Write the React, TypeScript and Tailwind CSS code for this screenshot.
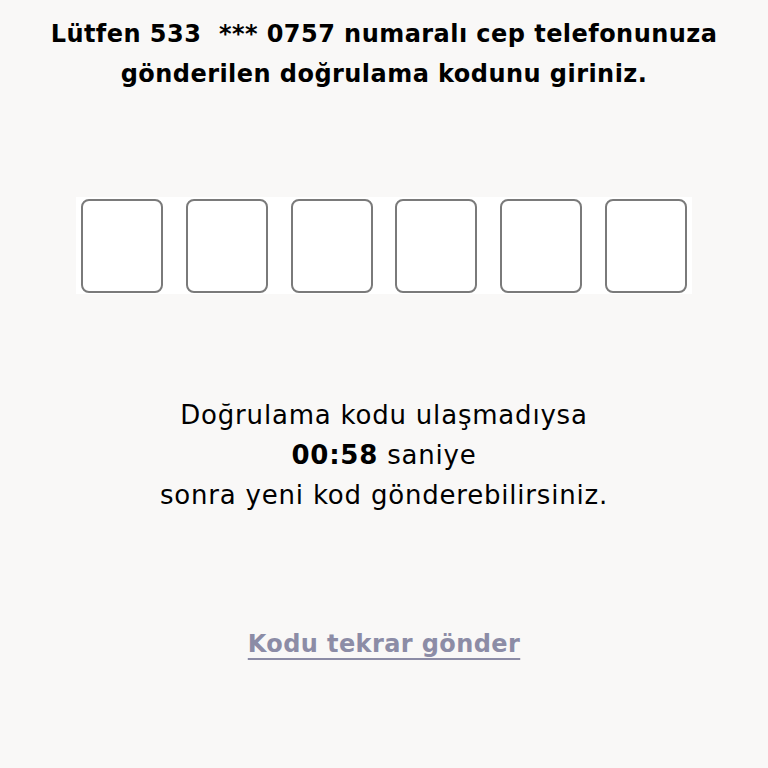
import { useRef, useState } from 'react';

const CODE_LENGTH = 6;

export default function App() {
  const [digits, setDigits] = useState<string[]>(Array(CODE_LENGTH).fill(''));
  const inputs = useRef<(HTMLInputElement | null)[]>([]);

  const handleChange = (index: number, value: string) => {
    const v = value.replace(/\D/g, '').slice(-1);
    const next = [...digits];
    next[index] = v;
    setDigits(next);
    if (v && index < CODE_LENGTH - 1) inputs.current[index + 1]?.focus();
  };

  return (
    <div
      className="min-h-screen w-full bg-[#f9f8f7] text-black flex flex-col items-center"
      style={{ fontFamily: '"DejaVu Sans", "Noto Sans", sans-serif' }}
    >
      <h1 className="mt-[14px] text-center text-[24px] leading-[40px] font-bold tracking-[0.45px]">
        Lütfen 533&nbsp; *** 0757 numaralı cep telefonunuza
        <br />
        gönderilen doğrulama kodunu giriniz.
      </h1>

      <div className="mt-[103px] w-[616px] h-[97px] bg-white flex items-center justify-between px-[5px]">
        {digits.map((d, i) => (
          <input
            key={i}
            ref={(el) => {
              inputs.current[i] = el;
            }}
            value={d}
            onChange={(e) => handleChange(i, e.target.value)}
            inputMode="numeric"
            maxLength={1}
            className="w-[82px] h-[94px] rounded-[8px] border-2 border-[#7a7a7a] bg-white text-center text-3xl outline-none"
          />
        ))}
      </div>

      <p className="mt-[101px] text-center text-[26px] leading-[40px] tracking-[0.8px]">
        Doğrulama kodu ulaşmadıysa
        <br />
        <span className="font-bold">00:58</span> saniye
        <br />
        sonra yeni kod gönderebilirsiniz.
      </p>

      <button className="mt-[109px] text-[24px] leading-[40px] font-semibold tracking-[0.4px] text-[#8c8ca6] underline underline-offset-[6px] decoration-[2px]">
        Kodu tekrar gönder
      </button>
    </div>
  );
}
